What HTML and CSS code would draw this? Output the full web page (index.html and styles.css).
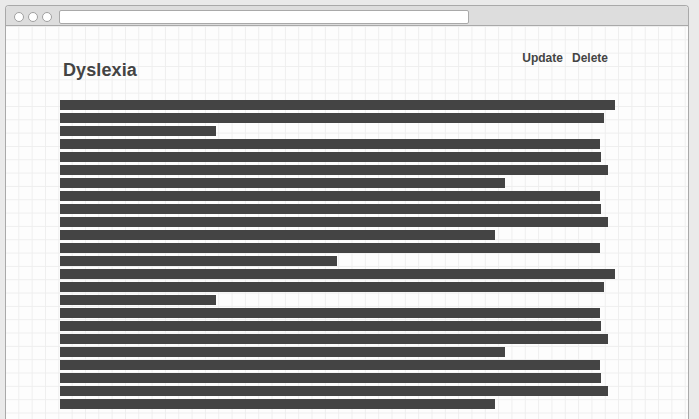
FILE: index.html
```html
<!DOCTYPE html>
<html>
<head lang="en">
    <meta charset="UTF-8">
    <title>Dyslexia</title>
    <link rel="stylesheet" href="styles.css">
</head>
<body>

<div class="window">
    <!-- browser bar -->
    <div class="toolbar">
        <span class="dot"></span>
        <span class="dot"></span>
        <span class="dot"></span>
        <span class="address"></span>
    </div>
    <!-- page -->
    <div class="page">
        <div class="header">
            <h1 class="title">Dyslexia</h1>
            <div class="actions">
                <a href="#">Update</a>
                <a href="#">Delete</a>
            </div>
        </div>
        <div class="lines">
            <div class="line" style="width: 555px"></div>
            <div class="line" style="width: 544px"></div>
            <div class="line" style="width: 156px"></div>
            <div class="line" style="width: 540px"></div>
            <div class="line" style="width: 541px"></div>
            <div class="line" style="width: 548px"></div>
            <div class="line" style="width: 445px"></div>
            <div class="line" style="width: 540px"></div>
            <div class="line" style="width: 541px"></div>
            <div class="line" style="width: 548px"></div>
            <div class="line" style="width: 435px"></div>
            <div class="line" style="width: 540px"></div>
            <div class="line" style="width: 277px"></div>
            <div class="line" style="width: 555px"></div>
            <div class="line" style="width: 544px"></div>
            <div class="line" style="width: 156px"></div>
            <div class="line" style="width: 540px"></div>
            <div class="line" style="width: 541px"></div>
            <div class="line" style="width: 548px"></div>
            <div class="line" style="width: 445px"></div>
            <div class="line" style="width: 540px"></div>
            <div class="line" style="width: 541px"></div>
            <div class="line" style="width: 548px"></div>
            <div class="line" style="width: 435px"></div>
        </div>
    </div>
</div>

</body>
</html>
```

FILE: styles.css
```css
* {
    margin: 0;
    padding: 0;
    box-sizing: border-box;
}

html, body {
    width: 100%;
    height: 100%;
    overflow: hidden;
}

body {
    background: #eaeaea;
    font-family: "Liberation Sans", Arial, sans-serif;
    color: #444;
}

.window {
    display: flex;
    flex-direction: column;
    margin: 5px 0 0 5px;
    width: 684px;
    height: 414px;
    border: 1px solid #a9a9a9;
    border-bottom: none;
    border-radius: 4px 4px 0 0;
    overflow: hidden;
    background: #fff;
}

.toolbar {
    display: flex;
    align-items: center;
    flex: none;
    height: 20px;
    padding: 3px 0 0 8px;
    background: #dddddd;
    border-bottom: 1px solid #a9a9a9;
}

.dot {
    width: 10px;
    height: 10px;
    margin-right: 4px;
    border: 1px solid #a0a0a0;
    border-radius: 50%;
    background: #fff;
}

.address {
    width: 410px;
    height: 14px;
    margin-left: 3px;
    border: 1px solid #a9a9a9;
    border-radius: 2px;
    background: #fff;
}

.page {
    flex: 1;
    overflow: hidden;
    padding: 25px 0 0 54px;
    background-color: #fdfdfd;
    background-image:
        linear-gradient(to right, #eeeeee 1px, transparent 1px),
        linear-gradient(to bottom, #eeeeee 1px, transparent 1px);
    background-size: 13.333px 13.333px;
    background-position: -1px 0;
}

.header {
    display: flex;
    justify-content: space-between;
    align-items: flex-start;
    width: 548px;
}

.title {
    margin-top: 9px;
    padding-left: 3px;
    font-size: 18px;
    line-height: 20px;
    font-weight: bold;
    letter-spacing: 0.1px;
    color: #444;
}

.actions {
    display: flex;
    gap: 9px;
}

.actions a {
    font-size: 12px;
    line-height: 14px;
    font-weight: bold;
    color: #444;
    text-decoration: none;
}

.lines {
    margin-top: 20px;
}

.line {
    height: 10px;
    margin-bottom: 3px;
    background: #444;
}
```
